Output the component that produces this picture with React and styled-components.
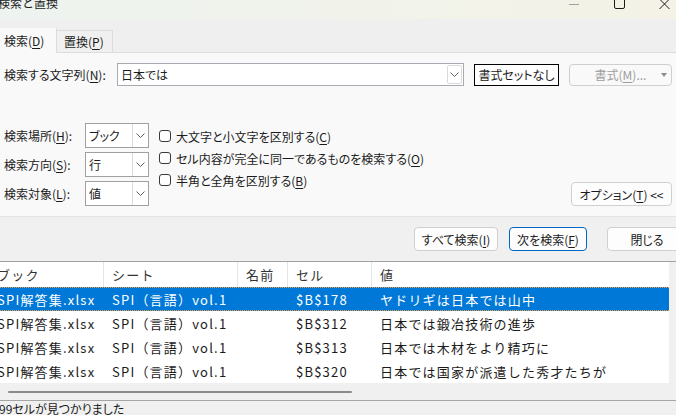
import React from 'react';
import styled, { createGlobalStyle } from 'styled-components';

const Global = createGlobalStyle`
  html, body { margin: 0; padding: 0; background: #f0f0f0; }
  body { font-family: "Noto Sans CJK JP", "Noto Sans", sans-serif; }
  #root { width: 676px; height: 415px; overflow: hidden; }
  u { text-decoration: underline; text-underline-offset: 2px; }
`;

const Window = styled.div`
  width: 676px;
  height: 415px;
  overflow: hidden;
  display: flex;
  flex-direction: column;
  font-family: "Noto Sans CJK JP", "Noto Sans", sans-serif;
  font-size: 12px;
  font-feature-settings: "palt";
  color: #1b1b1b;
  background: #f0f0f0;
`;

const TitleBar = styled.div`
  height: 19px;
  flex: none;
  display: flex;
  align-items: flex-start;
  background: linear-gradient(90deg, #edf3ef 0%, #f1f3eb 50%, #f4f2e6 100%);
  overflow: hidden;
`;

const Title = styled.span`
  margin: -4px 0 0 -2px;
  line-height: 14px;
  font-size: 12px;
  color: #222;
  font-feature-settings: normal;
`;

const Controls = styled.div`
  margin-left: auto;
  display: flex;
  gap: 34px;
  padding-right: 6px;
`;

const TabStrip = styled.div`
  height: 34px;
  box-sizing: border-box;
  flex: none;
  display: flex;
  align-items: flex-end;
  background: #efefef;
  border-bottom: 1px solid #dcdcdc;
`;

const Tab = styled.div`
  box-sizing: border-box;
  display: flex;
  align-items: center;
  position: relative;
  width: ${p => (p.$active ? '57px' : '56px')};
  height: ${p => (p.$active ? '25px' : '22px')};
  margin-bottom: ${p => (p.$active ? '-1px' : '0')};
  padding-left: ${p => (p.$active ? '4px' : '7px')};
  background: ${p => (p.$active ? '#f9f9f9' : '#f0f0f0')};
  border-top: ${p => (p.$active ? 'none' : '1px solid #dcdcdc')};
  border-right: 1px solid #dcdcdc;
  color: #1b1b1b;
  font-size: 12px;
`;

const Panel = styled.div`
  height: 164px;
  box-sizing: border-box;
  flex: none;
  background: #f9f9f9;
  border-bottom: 1px solid #e3e3e3;
  padding-top: 10px;
  display: flex;
  flex-direction: column;
`;

const FindRow = styled.div`
  display: flex;
  align-items: center;
  height: 23px;
`;

const Label = styled.div`
  box-sizing: border-box;
  width: ${p => p.$w}px;
  padding-left: 4px;
  flex: none;
  white-space: nowrap;
`;

const Combo = styled.div`
  box-sizing: border-box;
  width: 347px;
  height: 23px;
  background: #fff;
  border: 1px solid #a9a9b1;
  display: flex;
  align-items: center;
  padding-left: 3px;
`;

const ComboText = styled.span`
  flex: 1;
  font-size: 12px;
`;

const ComboDrop = styled.div`
  box-sizing: border-box;
  width: 15px;
  height: 19px;
  margin-right: 1px;
  border: 1px solid #dadada;
  border-radius: 2px;
  display: flex;
  align-items: center;
  justify-content: center;
`;

const PlainButton = styled.div`
  box-sizing: border-box;
  margin-left: 10px;
  width: 85px;
  height: 22px;
  background: #fff;
  border: 1px solid #000;
  display: flex;
  align-items: center;
  justify-content: center;
  font-size: 12px;
  white-space: nowrap;
`;

const DisabledButton = styled.div`
  box-sizing: border-box;
  margin-left: 10px;
  width: 103px;
  height: 22px;
  border: 1px solid #cfcfcf;
  border-radius: 4px;
  display: flex;
  align-items: center;
  justify-content: center;
  position: relative;
  color: #9d9d9d;
  font-size: 12px;
  white-space: nowrap;
`;

const Caret = styled.span`
  position: absolute;
  right: 4px;
  top: 8px;
  width: 0;
  height: 0;
  border-left: 3px solid transparent;
  border-right: 3px solid transparent;
  border-top: 4px solid #8c8c8c;
`;

const Options = styled.div`
  margin-top: 37px;
  height: 83px;
  display: flex;
`;

const SelectCol = styled.div`
  display: flex;
  flex-direction: column;
  gap: 4px;
`;

const SelectRow = styled.div`
  display: flex;
  align-items: center;
  height: 25px;
`;

const Select = styled.div`
  box-sizing: border-box;
  width: 64px;
  height: 25px;
  background: #fff;
  border: 1px solid #a0a0a0;
  display: flex;
  align-items: center;
`;

const SelectValue = styled.span`
  flex: 1;
  padding-left: 3px;
  font-size: 12px;
`;

const SelectDrop = styled.div`
  width: 15px;
  align-self: stretch;
  border-left: 1px solid #dadada;
  display: flex;
  align-items: center;
  justify-content: center;
`;

const CheckCol = styled.div`
  margin-left: 10px;
  margin-top: 2px;
  display: flex;
  flex-direction: column;
`;

const CheckRow = styled.div`
  display: flex;
  align-items: center;
  gap: 5px;
  height: 22px;
  white-space: nowrap;
`;

const Box = styled.span`
  box-sizing: border-box;
  width: 12px;
  height: 12px;
  border: 1px solid #3a3a3a;
  border-radius: 3px;
  background: #fff;
  flex: none;
`;

const RoundButton = styled.div`
  box-sizing: border-box;
  width: ${p => p.$w}px;
  height: 24px;
  flex: none;
  background: #fdfdfd;
  border: 1px solid ${p => (p.$primary ? '#0067c0' : '#d0d0d0')};
  border-radius: 4px;
  display: flex;
  align-items: center;
  justify-content: center;
  font-size: 12px;
  white-space: nowrap;
`;

const OptionsButton = styled(RoundButton)`
  margin-left: auto;
  margin-right: 4px;
  align-self: flex-end;
`;

const ButtonBar = styled.div`
  height: 44px;
  flex: none;
  box-sizing: border-box;
  padding: 10px 0 0 414px;
  display: flex;
  align-items: flex-start;
`;

const ListFrame = styled.div`
  flex: none;
  border-top: 1px solid #a0a0a0;
  display: flex;
  height: 121px;
`;

const ListBody = styled.div`
  width: 669px;
  background: #fff;
  overflow: hidden;
  display: flex;
  flex-direction: column;
`;

const VScroll = styled.div`
  width: 7px;
  background: #f0f0f0;
`;

const Grid = styled.div`
  display: grid;
  grid-template-columns: 115px 134px 50px 84px 1fr;
  margin-left: -11px;
  box-sizing: border-box;
  font-size: 13px;
  letter-spacing: 1.2px;
  font-feature-settings: normal;
  white-space: nowrap;
`;

const HeaderRow = styled(Grid)`
  height: 25px;
  color: #333;
`;

const HeaderCell = styled.div`
  display: flex;
  align-items: center;
  padding-left: 8px;
  border-right: ${p => (p.$last ? 'none' : '1px solid #e5e5e5')};
`;

const DataRow = styled(Grid)`
  height: 24px;
  background: ${p => (p.$sel ? '#0078d7' : '#fff')};
  color: ${p => (p.$sel ? '#fff' : '#1b1b1b')};
  border-top: 1px dotted ${p => (p.$sel ? '#f39a3c' : 'transparent')};
  border-bottom: 1px dotted ${p => (p.$sel ? '#f39a3c' : 'transparent')};
`;

const Cell = styled.div`
  display: flex;
  align-items: center;
  padding-left: 8px;
  overflow: hidden;
`;

const HScroll = styled.div`
  height: 17px;
  flex: none;
  background: #f0f0f0;
  box-sizing: border-box;
  padding: 8px 0 0 8px;
`;

const Thumb = styled.div`
  width: 344px;
  height: 2px;
  border-radius: 1px;
  background: #8a8a8a;
`;

const StatusBar = styled.div`
  height: 15px;
  flex: none;
  box-sizing: border-box;
  border-top: 1px solid #a5a5a5;
  background: #f0f0f0;
  font-size: 12px;
  line-height: 15px;
  margin-left: -1px;
  white-space: nowrap;
`;

const Chevron = () => (
  <svg width="9" height="5" viewBox="0 0 9 5">
    <polyline points="0.5,0.5 4.5,4.5 8.5,0.5" fill="none" stroke="#606060" strokeWidth="1" />
  </svg>
);

const MinIcon = () => (
  <svg width="11" height="19" viewBox="0 0 11 19">
    <line x1="0" y1="4.5" x2="10" y2="4.5" stroke="#a0a0a0" strokeWidth="1" />
  </svg>
);
const MaxIcon = () => (
  <svg width="11" height="19" viewBox="0 0 11 19">
    <rect x="0.5" y="-3" width="10" height="11.5" rx="1.5" fill="none" stroke="#1a1a1a" strokeWidth="1" />
  </svg>
);
const CloseIcon = () => (
  <svg width="11" height="19" viewBox="0 0 11 19">
    <line x1="0.5" y1="-1" x2="10.5" y2="9" stroke="#1a1a1a" strokeWidth="1" />
    <line x1="10.5" y1="-1" x2="0.5" y2="9" stroke="#1a1a1a" strokeWidth="1" />
  </svg>
);

const rows = [
  { cell: '$B$178', value: 'ヤドリギは日本では山中', sel: true },
  { cell: '$B$312', value: '日本では鍛冶技術の進歩' },
  { cell: '$B$313', value: '日本では木材をより精巧に' },
  { cell: '$B$320', value: '日本では国家が派遣した秀才たちが' },
];

const selects = [
  { label: <>検索場所(<u>H</u>):</>, value: 'ブック' },
  { label: <>検索方向(<u>S</u>):</>, value: '行' },
  { label: <>検索対象(<u>L</u>):</>, value: '値' },
];

const checks = [
  <>大文字と小文字を区別する(<u>C</u>)</>,
  <>セル内容が完全に同一であるものを検索する(<u>O</u>)</>,
  <>半角と全角を区別する(<u>B</u>)</>,
];

export default function App() {
  return (
    <Window>
      <Global />
      <TitleBar>
        <Title>検索と置換</Title>
        <Controls>
          <MinIcon />
          <MaxIcon />
          <CloseIcon />
        </Controls>
      </TitleBar>
      <TabStrip>
        <Tab $active>検索(<u>D</u>)</Tab>
        <Tab>置換(<u>P</u>)</Tab>
      </TabStrip>
      <Panel>
        <FindRow>
          <Label $w={117}>検索する文字列(<u>N</u>):</Label>
          <Combo>
            <ComboText>日本では</ComboText>
            <ComboDrop><Chevron /></ComboDrop>
          </Combo>
          <PlainButton>書式セットなし</PlainButton>
          <DisabledButton>
            書式(<u>M</u>)...
            <Caret />
          </DisabledButton>
        </FindRow>
        <Options>
          <SelectCol>
            {selects.map((s, i) => (
              <SelectRow key={i}>
                <Label $w={85}>{s.label}</Label>
                <Select>
                  <SelectValue>{s.value}</SelectValue>
                  <SelectDrop><Chevron /></SelectDrop>
                </Select>
              </SelectRow>
            ))}
          </SelectCol>
          <CheckCol>
            {checks.map((c, i) => (
              <CheckRow key={i}>
                <Box />
                <span>{c}</span>
              </CheckRow>
            ))}
          </CheckCol>
          <OptionsButton $w={101}>オプション(<u>T</u>) &lt;&lt;</OptionsButton>
        </Options>
      </Panel>
      <ButtonBar>
        <RoundButton $w={84}>すべて検索(<u>I</u>)</RoundButton>
        <RoundButton $w={78} $primary style={{ marginLeft: 11 }}>次を検索(<u>F</u>)</RoundButton>
        <RoundButton $w={80} style={{ marginLeft: 20 }}>閉じる</RoundButton>
      </ButtonBar>
      <ListFrame>
        <ListBody>
          <HeaderRow>
            <HeaderCell>ブック</HeaderCell>
            <HeaderCell>シート</HeaderCell>
            <HeaderCell>名前</HeaderCell>
            <HeaderCell>セル</HeaderCell>
            <HeaderCell $last>値</HeaderCell>
          </HeaderRow>
          {rows.map((r, i) => (
            <DataRow key={i} $sel={r.sel}>
              <Cell>SPI解答集.xlsx</Cell>
              <Cell>SPI（言語）vol.1</Cell>
              <Cell />
              <Cell>{r.cell}</Cell>
              <Cell>{r.value}</Cell>
            </DataRow>
          ))}
        </ListBody>
        <VScroll />
      </ListFrame>
      <HScroll>
        <Thumb />
      </HScroll>
      <StatusBar>99セルが見つかりました</StatusBar>
    </Window>
  );
}
